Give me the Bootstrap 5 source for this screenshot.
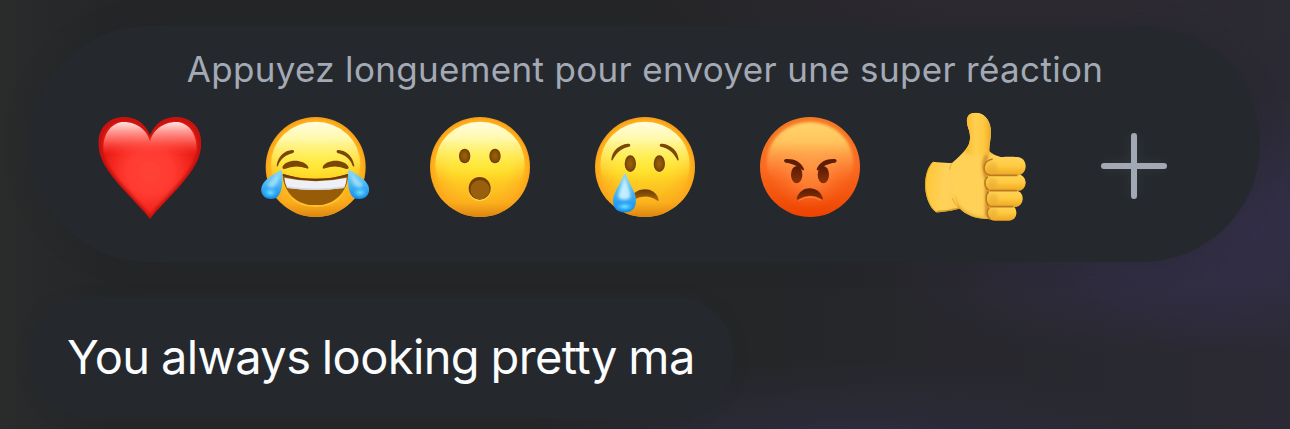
<!DOCTYPE html>
<html lang="fr">
<head>
<meta charset="utf-8">
<meta name="viewport" content="width=device-width, initial-scale=1">
<title>Réactions</title>
<link href="https://cdn.jsdelivr.net/npm/bootstrap@5.3.0/dist/css/bootstrap.min.css" rel="stylesheet">
<style>
  body {
    height: 429px;
    font-family: Inter, "Liberation Sans", sans-serif;
    background:
      radial-gradient(ellipse 190px 130px at 1245px 225px, #332e48 0%, rgba(51,46,72,.6) 45%, transparent 100%),
      radial-gradient(ellipse 240px 80px at 1130px 275px, #2f2c40 0%, transparent 100%),
      radial-gradient(ellipse 400px 100px at 1010px 0, #2e2a32 0%, transparent 100%),
      radial-gradient(ellipse 330px 90px at 850px 450px, #2d2d3f 0%, transparent 100%),
      linear-gradient(90deg, #2a2b2b 0, #252628 110px, #252628 760px, #28282f 1060px, #2b2a34 1290px);
  }
  .stage { padding: 26px 30px 0; gap: 36px; }
  .reaction-panel { height: 236px; border-radius: 118px; background: #25292d; box-shadow: 0 0 26px rgba(36,38,40,.3); }
  .hint { margin-top: 22px; height: 42px; line-height: 42px; font-size: 35px; letter-spacing: .33px; color: #a3aab6; white-space: nowrap; }
  .reaction-row { margin: 10px 0 0 55px; gap: 25px; }
  .reaction { width: 140px; height: 130px; flex: none; }
  .reaction svg { width: 140px; height: 130px; display: block; }
  .bubble { height: 120px; width: 703px; border-radius: 56px; padding-left: 37px; background: #25282d; color: #fbfcfe; font-size: 47px; line-height: 117px; letter-spacing: -.62px; word-spacing: -1.1px; white-space: nowrap; box-shadow: 0 0 12px rgba(37,40,44,.7); }
</style>
</head>
<body class="m-0 overflow-hidden">
<svg width="0" height="0" class="position-absolute" aria-hidden="true">
  <defs>
    <filter id="b2" filterUnits="userSpaceOnUse" x="-20" y="0" width="460" height="390"><feGaussianBlur stdDeviation="2"/></filter>
    <filter id="b5" filterUnits="userSpaceOnUse" x="-20" y="0" width="460" height="390"><feGaussianBlur stdDeviation="5"/></filter>
    <filter id="b12" filterUnits="userSpaceOnUse" x="-20" y="0" width="460" height="390"><feGaussianBlur stdDeviation="14"/></filter>
    <radialGradient id="rim" gradientUnits="userSpaceOnUse" cx="195" cy="205" r="155">
      <stop offset="0" stop-color="#ffe528"/><stop offset=".55" stop-color="#ffdb26"/><stop offset=".8" stop-color="#ffc322"/><stop offset=".93" stop-color="#fdac1b"/><stop offset="1" stop-color="#f59a16"/>
    </radialGradient>
    <linearGradient id="glow" x1="0" y1="0" x2="0" y2="1">
      <stop offset="0" stop-color="#fffce0"/><stop offset=".2" stop-color="#fff9ab"/><stop offset=".42" stop-color="#fff160" stop-opacity=".75"/><stop offset=".7" stop-color="#ffe42b" stop-opacity="0"/>
    </linearGradient>
    <linearGradient id="low" x1="0" y1="0" x2="0" y2="1">
      <stop offset=".5" stop-color="#f9a01b" stop-opacity="0"/><stop offset=".85" stop-color="#faa51a" stop-opacity=".7"/><stop offset="1" stop-color="#da8510"/>
    </linearGradient>
    <g id="face">
      <circle cx="195" cy="201" r="150" fill="url(#rim)"/>
      <circle cx="195" cy="201" r="150" fill="url(#low)"/>
      <ellipse cx="195" cy="193" rx="134" ry="128" fill="url(#glow)" filter="url(#b2)"/>
    </g>
    <linearGradient id="brown" x1="0" y1="0" x2="0" y2="1"><stop offset="0" stop-color="#653808"/><stop offset=".5" stop-color="#8b5206"/><stop offset="1" stop-color="#a96b08"/></linearGradient>
    <radialGradient id="eye"><stop offset="0" stop-color="#9d6309"/><stop offset=".65" stop-color="#855007"/><stop offset="1" stop-color="#6d3c07"/></radialGradient>
    <linearGradient id="drop" x1="0" y1="0" x2="0" y2="1"><stop offset="0" stop-color="#8fd9ee"/><stop offset=".4" stop-color="#4fbdf5"/><stop offset="1" stop-color="#128bed"/></linearGradient>
    <radialGradient id="dropShine"><stop offset="0" stop-color="#69e3ff"/><stop offset="1" stop-color="#58cdfd" stop-opacity="0"/></radialGradient>
    <linearGradient id="angry" x1="0" y1="0" x2="0" y2="1"><stop offset="0" stop-color="#f47a22"/><stop offset=".5" stop-color="#fb6a20"/><stop offset="1" stop-color="#ed4300"/></linearGradient>
    <radialGradient id="angryCore" gradientUnits="userSpaceOnUse" cx="195" cy="190" r="135"><stop offset="0" stop-color="#ff9344"/><stop offset=".5" stop-color="#ff8338" stop-opacity=".8"/><stop offset="1" stop-color="#fd6a27" stop-opacity="0"/></radialGradient>
    <linearGradient id="angryGlow" x1="0" y1="0" x2="0" y2="1"><stop offset="0" stop-color="#ffd56c"/><stop offset=".25" stop-color="#ffc45c"/><stop offset=".5" stop-color="#ff9e49" stop-opacity=".6"/><stop offset=".75" stop-color="#fd7a30" stop-opacity="0"/></linearGradient>
    <linearGradient id="angryEye" x1="0" y1="0" x2="0" y2="1"><stop offset="0" stop-color="#561b05"/><stop offset="1" stop-color="#8c3007"/></linearGradient>
    <linearGradient id="heartShine" gradientUnits="userSpaceOnUse" x1="0" y1="62" x2="0" y2="165"><stop offset="0" stop-color="#ffece8"/><stop offset=".25" stop-color="#ffaca5"/><stop offset=".6" stop-color="#ff6a61" stop-opacity=".8"/><stop offset="1" stop-color="#fe3a31" stop-opacity="0"/></linearGradient>
    <radialGradient id="heartCore" gradientUnits="userSpaceOnUse" cx="210" cy="215" r="140"><stop offset="0" stop-color="#ff4238"/><stop offset=".5" stop-color="#ff3a30"/><stop offset=".8" stop-color="#f5281f"/><stop offset="1" stop-color="#e91d16"/></radialGradient>
    <clipPath id="heartClip"><path d="M210 357C197 339 165 307 123 261C80 213 55 173 55 130C55 81 89 51 132 51C168 51 195 70 210 105C225 70 252 51 288 51C331 51 364 81 364 130C364 173 340 213 297 261C255 307 223 339 210 357Z"/></clipPath>
    <linearGradient id="finger" x1="0" y1="0" x2="0" y2="1"><stop offset="0" stop-color="#ffd45b"/><stop offset=".5" stop-color="#ffca3f"/><stop offset="1" stop-color="#eca522"/></linearGradient>
    <linearGradient id="palm" x1="0" y1="0" x2="1" y2=".15"><stop offset="0" stop-color="#ffc532"/><stop offset=".6" stop-color="#ffd25b"/><stop offset="1" stop-color="#ffcc50"/></linearGradient>
    <linearGradient id="thumb" gradientUnits="userSpaceOnUse" x1="170" y1="0" x2="245" y2="0"><stop offset="0" stop-color="#f9bc2c"/><stop offset=".35" stop-color="#ffd052"/><stop offset=".7" stop-color="#ffc83e"/><stop offset="1" stop-color="#e9a62a"/></linearGradient>
    <clipPath id="handClip"><path d="M127 188C144 172 166 154 176 134C184 112 179 96 173 79C166 52 175 38 197 38C218 38 234 53 240 75C248 105 236 134 238 154C247 164 260 167 278 173L278 300L238 357C204 358 166 346 148 324C132 304 118 222 127 188Z"/></clipPath>
    <clipPath id="smileClip"><path d="M97 221Q197 252 296 221C291 282 250 316 197 316C143 316 102 282 97 221Z"/></clipPath>
  </defs>
</svg>

<main class="stage d-flex flex-column align-items-stretch">
  <section class="reaction-panel d-flex flex-column">
    <div class="hint text-center">Appuyez longuement pour envoyer une super réaction</div>
    <div class="reaction-row d-flex">
      <div class="reaction" role="button" aria-label="Cœur">
        <svg viewBox="15 0 420 390">
          <g clip-path="url(#heartClip)">
            <path fill="#c8120e" d="M50 45H370V360H50Z"/>
            <path fill="url(#heartCore)" filter="url(#b5)" d="M210 346C195 324 165 296 132 259C91 213 68 172 68 132C68 91 97 66 132 66C169 66 200 91 210 125C220 91 251 66 288 66C324 66 352 91 352 132C352 172 329 213 288 259C255 296 225 324 210 346Z"/>
            <path fill="url(#heartShine)" filter="url(#b2)" d="M72 166C62 108 92 66 132 66C169 66 203 91 210 125C217 91 251 66 288 66C328 66 358 108 348 166Q210 175 72 166Z"/>
          </g>
        </svg>
      </div>
      <div class="reaction" role="button" aria-label="Rire">
        <svg viewBox="0 0 420 390">
          <use href="#face" x="2"/>
          <path fill="#7b4608" d="M80 197C84 169 103 151 127 150C134 150 134 158 127 160C107 165 92 176 84 197Q81 202 80 197ZM313 197C308 169 289 151 265 150C258 150 258 158 265 160C285 165 300 176 308 197Q312 202 313 197Z"/>
          <path fill="#7b4608" d="M97 202C106 176 162 176 175 201Q177 208 169 205Q136 193 104 207Q97 208 97 202ZM218 201C229 176 286 176 296 202Q297 208 289 207Q258 193 225 205Q217 208 218 201Z"/>
          <path fill="#ffc62d" d="M100 226Q104 320 197 321Q289 320 294 226L290 260Q268 311 197 314Q122 312 103 260Z"/>
          <g clip-path="url(#smileClip)">
            <path fill="#985b08" d="M90 210H305V320H90Z"/>
            <path fill="#6d3906" d="M94 217Q197 250 299 217L297 228Q197 256 98 228Z"/>
            <path fill="#edf0f6" d="M103 233Q197 254 290 233Q290 249 282 264Q197 276 112 264Q104 250 103 233Z"/>
            <path fill="#d5d7de" d="M109 259Q197 272 285 259L282 264Q197 276 112 264Z"/>
          </g>
          <g id="sideTear">
            <path fill="url(#drop)" d="M92 210C96 209 97 214 97 222C98 255 96 297 64 297C41 297 28 278 36 257C45 236 74 222 92 210Z"/>
            <ellipse cx="61" cy="278" rx="22" ry="16" fill="url(#dropShine)"/>
            <path d="M88 220C86 238 84 256 70 262C58 265 48 258 56 248Q72 234 88 220Z" fill="#c9f1fc" opacity=".6" filter="url(#b5)"/>
          </g>
          <use href="#sideTear" transform="translate(391 0) scale(-1 1)"/>
        </svg>
      </div>
      <div class="reaction" role="button" aria-label="Surprise">
        <svg viewBox="0 0 420 390">
          <use href="#face"/>
          <g fill="#ffe05a" opacity=".8"><ellipse cx="149" cy="172" rx="17" ry="22"/><ellipse cx="240" cy="172" rx="17" ry="22"/><ellipse cx="194" cy="269" rx="33" ry="34"/></g>
          <g fill="url(#eye)"><ellipse cx="149" cy="168" rx="17" ry="22"/><ellipse cx="240" cy="168" rx="17" ry="22"/></g>
          <ellipse cx="194" cy="265" rx="33" ry="34" fill="#733e06"/>
          <ellipse cx="195" cy="269" rx="29" ry="29" fill="#985e08" filter="url(#b2)"/>
        </svg>
      </div>
      <div class="reaction" role="button" aria-label="Tristesse">
        <svg viewBox="0 0 420 390">
          <use href="#face"/>
          <g fill="#ffe35c" opacity=".65"><ellipse cx="152" cy="194" rx="18" ry="25"/><ellipse cx="238" cy="194" rx="18" ry="25"/></g>
          <g fill="url(#eye)"><ellipse cx="151" cy="191" rx="17" ry="25"/><ellipse cx="238" cy="191" rx="17" ry="25"/></g>
          <path fill="#7b4706" d="M94 178C96 153 117 134 143 131C151 130 154 137 147 140C124 145 109 158 98 180Q94 184 94 178ZM296 178C294 153 273 134 247 131C239 130 236 137 243 140C266 145 281 158 292 180Q296 184 296 178Z"/>
          <path fill="url(#brown)" d="M155 290C170 260 226 257 236 299Q236 306 230 301Q199 279 160 300Z"/>
          <path fill="url(#drop)" d="M134 221C138 221 140 230 145 241C155 264 168 281 168 302C168 326 154 337 134 337C113 337 99 325 99 303C99 281 117 257 126 236C130 227 131 221 134 221Z"/>
          <path d="M134 229C138 247 152 273 151 290C150 302 116 302 115 290C116 275 130 248 134 229Z" fill="#d8f8ff" opacity=".85" filter="url(#b5)"/>
          <ellipse cx="134" cy="320" rx="27" ry="14" fill="url(#dropShine)"/>
        </svg>
      </div>
      <div class="reaction" role="button" aria-label="Colère">
        <svg viewBox="0 0 420 390">
          <circle cx="195" cy="201" r="150" fill="url(#angry)"/>
          <circle cx="195" cy="190" r="135" fill="url(#angryCore)"/>
          <ellipse cx="195" cy="187" rx="130" ry="121" fill="url(#angryGlow)" filter="url(#b5)"/>
          <g fill="url(#angryEye)"><ellipse cx="155" cy="224" rx="17" ry="26"/><ellipse cx="235" cy="224" rx="17" ry="26"/></g>
          <path fill="#5d1e04" d="M122 177C145 175 167 184 176 205Q179 214 172 210C159 199 143 190 122 188Q112 182 122 177ZM270 177C247 175 225 184 216 205Q213 214 220 210C233 199 249 190 270 188Q280 182 270 177Z"/>
          <path fill="url(#angryEye)" d="M155 294C169 255 222 255 234 296Q234 300 229 297Q194 277 161 298Q155 301 155 294Z"/>
          <path d="M162 301Q195 281 228 301" fill="none" stroke="#ff9b48" stroke-width="3" opacity=".7"/>
        </svg>
      </div>
      <div class="reaction" role="button" aria-label="Pouce levé">
        <svg viewBox="0 0 420 390">
          <path fill="url(#palm)" d="M69 185C91 187 111 190 128 188L154 324C129 331 99 337 78 337C36 303 37 214 69 185Z"/>
          <path d="M69 187C38 216 38 301 78 335" fill="none" stroke="#e3a823" stroke-width="3" filter="url(#b2)"/>
          <path d="M80 335Q115 333 149 324" fill="none" stroke="#d99b24" stroke-width="5" filter="url(#b2)"/>
          <g clip-path="url(#handClip)">
            <path fill="#ffd157" d="M100 30H285V365H100Z"/>
            <path fill="url(#thumb)" d="M160 20H255V155Q205 180 160 155Z" filter="url(#b5)"/>
            <path d="M127 290C139 334 180 359 238 361" fill="none" stroke="#e7aa2b" stroke-width="14" filter="url(#b5)"/>
            <path d="M232 165C215 190 224 220 231 238V350" fill="none" stroke="#ce8923" stroke-width="11" filter="url(#b5)"/>
          </g>
          <path d="M127 188Q119 198 119 209M126 294Q132 313 150 326" fill="none" stroke="#d8962b" stroke-width="3" opacity=".7" filter="url(#b2)"/>
          <g fill="url(#finger)">
            <rect x="231" y="315" width="88" height="47" rx="21"/>
            <rect x="227" y="271" width="111" height="50" rx="23"/>
            <rect x="224" y="223" width="123" height="50" rx="24"/>
            <path d="M248 176C277 168 306 170 322 171C338 172 347 184 347 198C347 215 336 227 318 227H248C230 227 221 216 221 202C221 187 232 179 248 176Z"/>
          </g>
          <g fill="none" stroke="#bd7920" stroke-width="5" filter="url(#b2)"><path d="M237 226H322M238 272H322M238 320H310M248 177C216 183 214 219 240 226M234 230C221 239 222 262 236 270M236 275C226 284 225 308 238 318M238 323C229 332 230 350 240 358"/></g>
          <g fill="#dfa039" opacity=".38" filter="url(#b5)"><ellipse cx="246" cy="204" rx="17" ry="17"/><ellipse cx="247" cy="249" rx="16" ry="16"/><ellipse cx="249" cy="296" rx="16" ry="16"/><ellipse cx="249" cy="339" rx="15" ry="14"/></g>
        </svg>
      </div>
      <div class="reaction" role="button" aria-label="Plus">
        <svg viewBox="-15 0 420 390">
          <path d="M162 108V288M72 198H252" stroke="#4b5357" stroke-width="24" opacity=".28" filter="url(#b12)"/>
          <path d="M162 108V288M72 198H252" fill="none" stroke="#a2a9b4" stroke-width="18" stroke-linecap="round"/>
        </svg>
      </div>
    </div>
  </section>
  <div class="bubble">You always looking pretty ma</div>
</main>
<script src="https://cdn.jsdelivr.net/npm/bootstrap@5.3.0/dist/js/bootstrap.bundle.min.js"></script>
</body>
</html>
